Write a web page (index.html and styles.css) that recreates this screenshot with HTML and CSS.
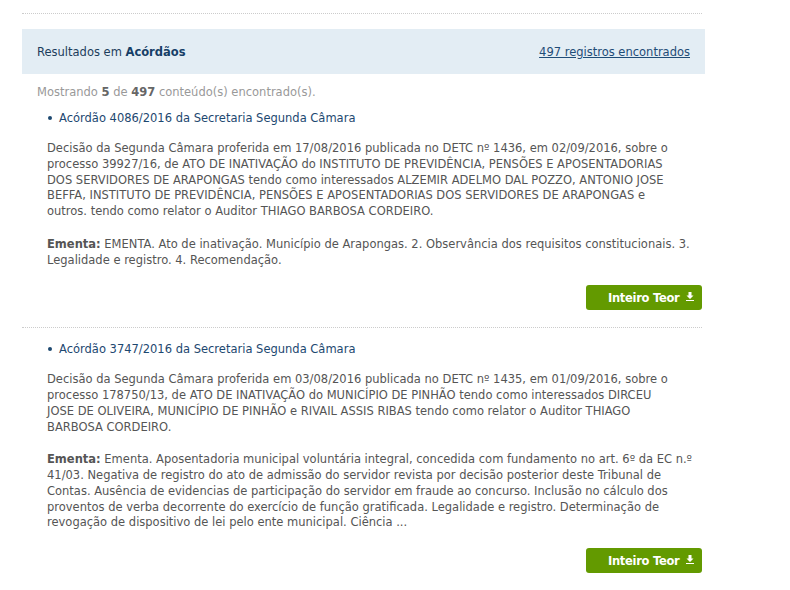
FILE: index.html
```html
<!DOCTYPE html>
<html lang="pt-BR">
<head>
<meta charset="utf-8">
<title>Resultados em Acórdãos</title>
<link rel="stylesheet" href="styles.css">
</head>
<body>
<div class="page">
  <div class="top-rule"></div>
  <div class="results-head">
    <span class="results-title">Resultados em <strong>Acórdãos</strong></span>
    <a class="results-count" href="#">497 registros encontrados</a>
  </div>
  <p class="showing">Mostrando <strong>5</strong> de <strong>497</strong> conteúdo(s) encontrado(s).</p>

  <div class="item">
    <ul class="item-title"><li>Acórdão 4086/2016 da Secretaria Segunda Câmara</li></ul>
    <p class="item-text">Decisão da Segunda Câmara proferida em 17/08/2016 publicada no DETC nº 1436, em 02/09/2016, sobre o<br>processo 39927/16, de ATO DE INATIVAÇÃO do INSTITUTO DE PREVIDÊNCIA, PENSÕES E APOSENTADORIAS<br>DOS SERVIDORES DE ARAPONGAS tendo como interessados ALZEMIR ADELMO DAL POZZO, ANTONIO JOSE<br>BEFFA, INSTITUTO DE PREVIDÊNCIA, PENSÕES E APOSENTADORIAS DOS SERVIDORES DE ARAPONGAS e<br>outros. tendo como relator o Auditor THIAGO BARBOSA CORDEIRO.</p>
    <p class="item-text"><strong>Ementa:</strong> EMENTA. Ato de inativação. Município de Arapongas. 2. Observância dos requisitos constitucionais. 3.<br>Legalidade e registro. 4. Recomendação.</p>
    <div class="actions">
      <a class="btn" href="#">Inteiro Teor <svg class="dl" width="8" height="9" viewBox="0 0 8 9"><path d="M2.5 0h3v3.5h2L4 7 0.5 3.5h2z" fill="#fff"/><rect x="0" y="8" width="8" height="1.2" fill="#fff"/></svg></a>
    </div>
  </div>

  <div class="item">
    <ul class="item-title"><li>Acórdão 3747/2016 da Secretaria Segunda Câmara</li></ul>
    <p class="item-text">Decisão da Segunda Câmara proferida em 03/08/2016 publicada no DETC nº 1435, em 01/09/2016, sobre o<br>processo 178750/13, de ATO DE INATIVAÇÃO do MUNICÍPIO DE PINHÃO tendo como interessados DIRCEU<br>JOSE DE OLIVEIRA, MUNICÍPIO DE PINHÃO e RIVAIL ASSIS RIBAS tendo como relator o Auditor THIAGO<br>BARBOSA CORDEIRO.</p>
    <p class="item-text"><strong>Ementa:</strong> Ementa. Aposentadoria municipal voluntária integral, concedida com fundamento no art. 6º da EC n.º<br>41/03. Negativa de registro do ato de admissão do servidor revista por decisão posterior deste Tribunal de<br>Contas. Ausência de evidencias de participação do servidor em fraude ao concurso. Inclusão no cálculo dos<br>proventos de verba decorrente do exercício de função gratificada. Legalidade e registro. Determinação de<br>revogação de dispositivo de lei pelo ente municipal. Ciência ...</p>
    <div class="actions">
      <a class="btn" href="#">Inteiro Teor <svg class="dl" width="8" height="9" viewBox="0 0 8 9"><path d="M2.5 0h3v3.5h2L4 7 0.5 3.5h2z" fill="#fff"/><rect x="0" y="8" width="8" height="1.2" fill="#fff"/></svg></a>
    </div>
  </div>
</div>
</body>
</html>
```
FILE: styles.css
```css
html, body {
  margin: 0;
  padding: 0;
  background: #fff;
}
body {
  font-family: "DejaVu Sans", Verdana, sans-serif;
  font-size: 11.5px;
  color: #555;
}
.page {
  width: 683px;
  margin-left: 22px;
  padding-top: 13px;
}
.top-rule {
  width: 680px;
  border-top: 1px dotted #ccc;
}
.results-head {
  margin-top: 15px;
  height: 45px;
  background: #e3edf4;
  display: flex;
  align-items: center;
  justify-content: space-between;
  padding: 0 15px;
  box-sizing: border-box;
}
.results-title {
  color: #1d3d5c;
}
.results-title strong {
  color: #163f67;
}
.results-count {
  color: #1f4c77;
  text-decoration: underline;
}
.showing {
  margin: 6px 0 0 15px;
  line-height: 24px;
  color: #999;
}
.showing strong {
  color: #666;
}
.item {
  width: 680px;
  border-bottom: 1px dotted #ccc;
}
.item + .item {
  border-bottom: none;
}
.item-title {
  list-style: none;
  margin: 2px 0 0;
  padding: 0 0 0 26px;
  line-height: 24px;
  color: #1d4870;
}
.item + .item .item-title {
  margin-top: 9px;
}
.item-title li::before {
  content: "";
  display: inline-block;
  width: 4px;
  height: 4px;
  border-radius: 50%;
  background: #1d4870;
  margin-right: 7px;
  vertical-align: middle;
  position: relative;
  top: -1px;
}
.item-text {
  margin: 11px 0 17px 25px;
  line-height: 15.75px;
  color: #555;
}
.item-text + .item-text {
  margin-top: 0;
}
.item-text strong {
  color: #555;
}
.actions {
  display: flex;
  justify-content: flex-end;
  padding-bottom: 17px;
}
.btn {
  display: inline-flex;
  align-items: center;
  gap: 7px;
  height: 25px;
  width: 116px;
  box-sizing: border-box;
  padding-left: 22px;
  background: #639a00;
  border-radius: 3px;
  color: #fff;
  font-weight: bold;
  font-size: 11.5px;
  text-decoration: none;
  letter-spacing: -0.3px;
}
.dl {
  margin-top: -3px;
}
```
